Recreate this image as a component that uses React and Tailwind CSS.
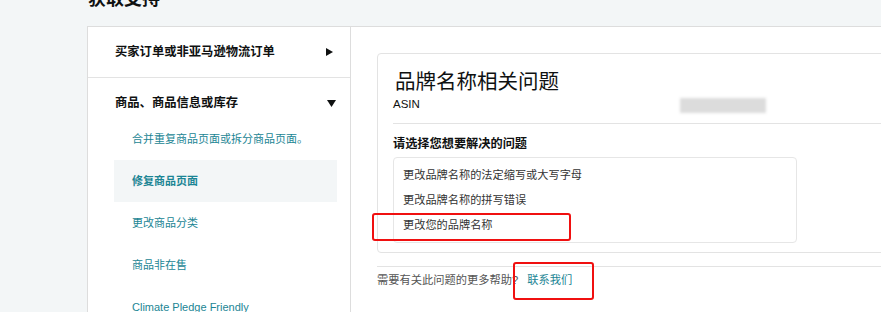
import React from 'react';

const font = { fontFamily: '"Liberation Sans", "Noto Sans CJK SC", sans-serif' };

const subItems = [
  { label: '合并重复商品页面或拆分商品页面。' },
  { label: '修复商品页面', active: true },
  { label: '更改商品分类' },
  { label: '商品非在售' },
  { label: 'Climate Pledge Friendly' },
];

const issues = ['更改品牌名称的法定缩写或大写字母', '更改品牌名称的拼写错误', '更改您的品牌名称'];

function TriRight() {
  return (
    <svg width="7" height="8" viewBox="0 0 7 8" className="shrink-0">
      <path d="M0 0 L7 4 L0 8 Z" fill="#0f1111" />
    </svg>
  );
}

function TriDown() {
  return (
    <svg width="9" height="7" viewBox="0 0 9 7" className="shrink-0">
      <path d="M0 0 L9 0 L4.5 7 Z" fill="#0f1111" />
    </svg>
  );
}

export default function App() {
  return (
    <div className="relative w-[881px] h-[312px] overflow-hidden bg-[#f3f6f7] pl-[87px]" style={font}>
      {/* page title, scrolled partly out of view */}
      <div className="h-[26px] pl-[1px] overflow-hidden">
        <h1 className="-mt-[14px] text-[18px] leading-[26px] font-bold text-[#0f1111]">获取支持</h1>
      </div>

      <div className="flex h-[300px]">
        {/* left nav */}
        <div className="w-[264px] shrink-0 bg-white border border-[#dddddd] border-b-0">
          <div className="h-[51px] flex items-center justify-between pl-[27px] pr-[17px] border-b border-[#e3e3e3]">
            <span className="text-[12.3px] font-bold text-[#0f1111]">买家订单或非亚马逊物流订单</span>
            <TriRight />
          </div>
          <div className="h-[40px] flex items-start justify-between pl-[27px] pr-[14px] pt-[16px]">
            <span className="text-[12.3px] leading-[18px] font-bold text-[#0f1111]">商品、商品信息或库存</span>
            <span className="mt-[6px]"><TriDown /></span>
          </div>
          <div className="ml-[26px] mr-[13px] flex flex-col">
            {subItems.map((it) => (
              <div
                key={it.label}
                className={`h-[42px] flex items-center pl-[18px] text-[11px] text-[#1b8594] ${
                  it.active ? 'bg-[#f3f6f7] font-bold' : ''
                }`}
              >
                {it.label}
              </div>
            ))}
          </div>
        </div>

        {/* main content */}
        <div className="flex-1 min-w-0 bg-white border-t border-[#dddddd] pl-[26px] pt-[26px] overflow-hidden">
          <div className="w-[600px] border border-[#e3e3e3] rounded-[4px] pl-[15px] pt-[14px] pb-[9px]">
            <h2 className="text-[20.5px] leading-[28px] text-[#0f1111] pl-[2px]">品牌名称相关问题</h2>
            <div className="flex items-center h-[16px] mt-[1px]">
              <span className="text-[11.5px] text-[#0f1111] w-[287px]">ASIN</span>
              <span className="h-[15px] w-[86px] bg-[#dcdcdc] blur-[1.5px]" />
            </div>
            <div className="mt-[10px] border-t border-[#e3e3e3]" />
            <div className="mt-[12px] text-[12.2px] leading-[16px] font-bold text-[#0f1111]">请选择您想要解决的问题</div>
            <div className="mt-[5px] w-[404px] border border-[#e6e6e6] rounded-[4px] pl-[9px] pt-[5px] pb-[4px]">
              {issues.map((t) => (
                <div key={t} className="h-[25px] flex items-center text-[11.2px] text-[#333333]">
                  {t}
                </div>
              ))}
            </div>
          </div>
          <div className="mt-[13px] w-[600px] border-t border-[#e3e3e3]" />
          <div className="mt-[5px] flex items-center text-[11.25px] leading-[16px]">
            <span className="text-[#555555]">需要有关此问题的更多帮助?</span>
            <span className="ml-[9px] text-[#1b8594]">联系我们</span>
          </div>
        </div>
      </div>

      {/* red annotation boxes */}
      <div className="absolute left-[372px] top-[213px] w-[199px] h-[28px] border-2 border-[#f01010] rounded-[3px]" />
      <div className="absolute left-[513px] top-[262px] w-[81px] h-[38px] border-2 border-[#f01010] rounded-[3px]" />
    </div>
  );
}
